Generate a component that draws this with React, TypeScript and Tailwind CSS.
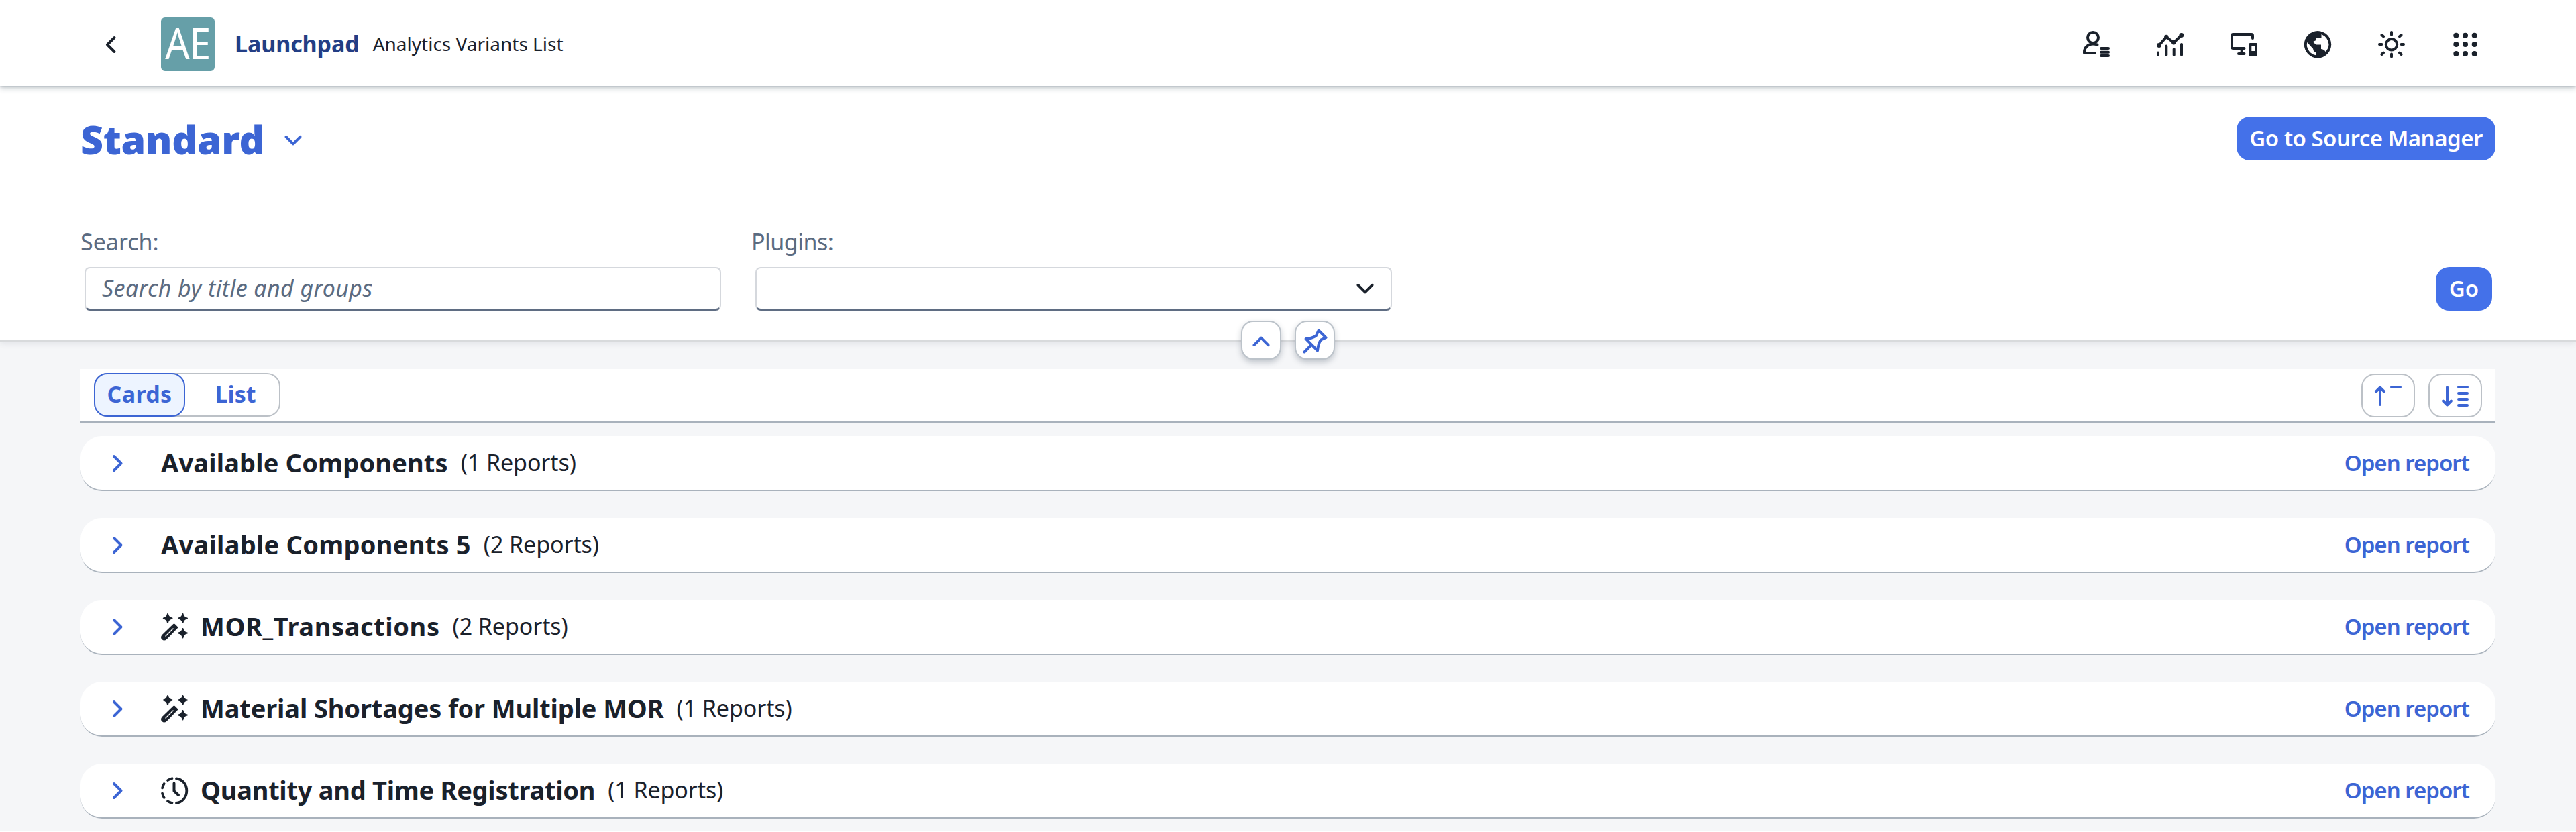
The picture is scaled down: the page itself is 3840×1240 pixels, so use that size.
import type { ReactNode } from "react";

const groups = [
  { title: "Available Components", count: 1, icon: null, tracking: "tracking-[0.15px]" },
  { title: "Available Components 5", count: 2, icon: null, tracking: "tracking-[0.25px]" },
  { title: "MOR_Transactions", count: 2, icon: "wand", tracking: "tracking-[0.6px]" },
  { title: "Material Shortages for Multiple MOR", count: 1, icon: "wand", tracking: "tracking-[-0.13px]" },
  { title: "Quantity and Time Registration", count: 1, icon: "clock", tracking: "tracking-[-0.27px]" },
];

function Icon({ children, className = "" }: { children: ReactNode; className?: string }) {
  return (
    <svg
      viewBox="0 0 40 40"
      fill="none"
      stroke="currentColor"
      strokeWidth={4}
      strokeLinecap="round"
      strokeLinejoin="round"
      className={`size-10 shrink-0 overflow-visible ${className}`}
    >
      {children}
    </svg>
  );
}

function UserListIcon() {
  return (
    <Icon>
      <circle cx="15" cy="10" r="8" />
      <path d="M21.500 20.700Q18.500 19.500 15 19.500C7.500 19.500 2 25 2 31.500V33H18" />
      <path d="M27 26H38M27 31.700H38M27 37H38" />
    </Icon>
  );
}

function ChartIcon() {
  return (
    <Icon>
      <path d="M3.500 21.500L14.300 9L25.300 17.500L37 6.300" />
      <g fill="currentColor" stroke="none">
        <circle cx="3.5" cy="21.5" r="3.4" />
        <circle cx="14.3" cy="9" r="3.2" />
        <circle cx="25.3" cy="17.3" r="3.2" />
        <circle cx="36.8" cy="6.4" r="3.4" />
      </g>
      <path d="M2 32.500V36M14.300 22.500V36M25.700 27V36M37 20V36" />
    </Icon>
  );
}

function DevicesIcon() {
  return (
    <Icon>
      <path d="M33 11V7Q33 5 31 5H4Q2 5 2 7V24Q2 26 4 26H20.500M16.700 26V34M12 34H20.500" />
      <path
        d="M29 18H38.500Q40 18 40 19.500V36.500Q40 38 38.500 38H29Q27.500 38 27.500 36.500V19.500Q27.500 18 29 18ZM31.300 22V30H36.200V22Z"
        fill="currentColor"
        fillRule="evenodd"
        stroke="none"
      />
    </Icon>
  );
}

function GlobeIcon() {
  return (
    <Icon>
      <circle cx="20" cy="20.3" r="20.2" fill="currentColor" stroke="none" />
      <path
        d="M25.500 5Q35.500 9.500 36.500 20Q36.300 26.500 31.500 31Q30 27.500 25 27V20.500H17.500L12.700 16.300L17.500 14V10H25.500Z"
        fill="white"
        stroke="none"
      />
      <path d="M4.300 17L13 26.500L14 30L18 33V36.500Q6.500 34.500 3.900 23Q3.600 19.500 4.300 17Z" fill="white" stroke="none" />
    </Icon>
  );
}

function SunIcon() {
  return (
    <Icon>
      <circle cx="20" cy="20.3" r="8.2" />
      <path d="M20 2V6M20 34.500V38.500M2 20H5.500M34.500 20H38M5.500 6L8 8.300M34.500 6L32 8.300M5.500 35L8 32.500M34.500 35L32 32.500" />
    </Icon>
  );
}

function GridIcon() {
  return (
    <Icon>
      {[6.7, 20, 34].map((cy) =>
        [6.3, 20, 33.7].map((cx) => (
          <circle key={`${cx}-${cy}`} cx={cx} cy={cy} r="4" fill="currentColor" stroke="none" />
        ))
      )}
    </Icon>
  );
}

function WandIcon() {
  return (
    <Icon>
      <g fill="currentColor" strokeWidth={2}>
        <path d="M10 1Q10.700 6.300 16.500 7.500Q10.700 8.700 10 14Q9.300 8.700 3.800 7.500Q9.300 6.300 10 1Z" />
        <path d="M32.500 1Q33.200 6.300 39 7.500Q33.200 8.700 32.500 14Q31.800 8.700 26 7.500Q31.800 6.300 32.500 1Z" />
        <path d="M32.500 23Q33.200 28.300 39 29.500Q33.200 30.700 32.500 36.500Q31.800 30.700 26 29.500Q31.800 28.300 32.500 23Z" />
      </g>
      <path d="M19.500 17.700L23 21.200L7 37.500Q4.800 39.400 3 37.700Q1.200 36 3 33.800Z" fill="currentColor" />
      <path d="M7 34L18 23" stroke="white" strokeWidth={1.4} />
    </Icon>
  );
}

function ClockIcon() {
  return (
    <Icon>
      <path d="M23 2.500C32 3.500 38.300 11 38.300 20.500S32 37.800 23 39" strokeWidth={3.8} />
      <path d="M16.500 2.200Q13 3 10 5M4.700 10Q2.800 13 2 16.500M2 24.500Q2.800 28 4.700 31M10 36.200Q13 38 16.500 38.700" strokeWidth={3.6} />
      <path d="M19.500 9.500V21L26 27" />
    </Icon>
  );
}

function ChevronDown({ className = "" }: { className?: string }) {
  return (
    <Icon className={className}>
      <path d="M9.500 14.800L20 25.300L30.500 14.800" />
    </Icon>
  );
}

function Header() {
  return (
    <header className="relative z-10 flex h-32 shrink-0 items-center bg-white pt-1 pr-[145px] pl-[145px] shadow-[0_4px_8px_0_rgba(34,53,72,0.2),0_1px_4px_0_rgba(34,53,72,0.22)]">
      <button type="button" aria-label="Back">
        <Icon>
          <path d="M25.500 10L15 20.500L25.500 31" />
        </Icon>
      </button>
      <div className="ml-[55px] flex size-20 items-center justify-center rounded-[6px] bg-[#669fa8] pb-[4px]">
        <span className="inline-block scale-x-[0.89] text-[64px] leading-none text-white">AE</span>
      </div>
      <span className="ml-[30px] pb-[2px] text-[34px] leading-none font-bold tracking-[-0.1px] text-[#233e85]">
        Launchpad
      </span>
      <span className="ml-[20px] pb-[2px] text-[28px] leading-none">Analytics Variants List</span>
      <nav className="ml-auto flex items-center gap-[70px]">
        <UserListIcon />
        <ChartIcon />
        <DevicesIcon />
        <GlobeIcon />
        <SunIcon />
        <GridIcon />
      </nav>
    </header>
  );
}

function FilterBar() {
  return (
    <section className="relative h-[381px] shrink-0 border-b-2 border-[#d8dadc] bg-white px-[120px] pt-[46px] shadow-[0_4px_8px_0_rgba(34,53,72,0.08)]">
      <div className="flex h-[65px] items-center justify-between">
        <div className="flex items-center text-[#3c65d4]">
          <h1 className="pt-px text-[59px] leading-none font-black tracking-[-0.3px]">Standard</h1>
          <ChevronDown className="mt-[5px] ml-[23px]" />
        </div>
        <button
          type="button"
          className="flex h-[65px] w-[386px] items-center justify-center rounded-[20px] bg-[#4471e9] pb-[2px] text-[33px] leading-none font-semibold tracking-[-0.5px] whitespace-nowrap text-white"
        >
          Go to Source Manager
        </button>
      </div>

      {/* Filters */}
      <div className="mt-[104px] flex items-end">
        <label className="flex flex-col">
          <span className="text-[34px] leading-[34px] text-[#5b6b81]">Search:</span>
          <input
            type="text"
            placeholder="Search by title and groups"
            className="mt-[21px] ml-[6px] h-[65px] w-[949px] rounded-[8px] border-2 border-b-3 border-[#d5d8dd] border-b-[#5f6d83] pr-6 pb-[2px] pl-[24px] text-[34px] tracking-[0.4px] italic placeholder:text-[#5b6b81] focus:outline-none"
          />
        </label>
        <div className="ml-[45px] flex flex-col">
          <span className="text-[34px] leading-[34px] tracking-[-0.5px] text-[#5b6b81]">Plugins:</span>
          <button
            type="button"
            aria-label="Plugins"
            className="mt-[21px] ml-[6px] flex h-[65px] w-[949px] items-center justify-end rounded-[8px] border-2 border-b-3 border-[#d5d8dd] border-b-[#5f6d83] pr-[18px]"
          >
            <ChevronDown />
          </button>
        </div>
        <button
          type="button"
          className="mr-[5px] ml-auto flex h-[65px] w-[84px] items-center justify-center rounded-[20px] bg-[#4471e9] pb-[2px] text-[33px] leading-none font-semibold text-white"
        >
          Go
        </button>
      </div>

      {/* Collapse and pin buttons over the bottom edge */}
      <div className="absolute top-[350px] left-[1850px] flex gap-5 text-[#3c65d4]">
        <button
          type="button"
          aria-label="Collapse"
          className="flex h-[58px] w-[60px] items-center justify-center rounded-[18px] border-2 border-[#bcc3ca] bg-white shadow-[0_4px_8px_0_rgba(34,53,72,0.25)]"
        >
          <ChevronDown className="mt-[3px] rotate-180" />
        </button>
        <button
          type="button"
          aria-label="Pin"
          className="flex h-[58px] w-[60px] items-center justify-center rounded-[18px] border-2 border-[#bcc3ca] bg-white shadow-[0_4px_8px_0_rgba(34,53,72,0.25)]"
        >
          <Icon>
            <path d="M25.700 5.500L36.500 16.200L29 19.500Q25 25 24 35.500L6.700 18Q15 17.500 21.700 13.700Z" />
            <path d="M14.700 27L4.500 37.500" />
          </Icon>
        </button>
      </div>
    </section>
  );
}

function Toolbar() {
  return (
    <div className="flex h-20 items-start justify-between border-b-2 border-[#a9b2bc] bg-white px-5 text-[#3c65d4]">
      <div className="mt-[6px] flex h-[65px] w-[278px] rounded-[20px] text-[34px] leading-none font-bold shadow-[inset_0_0_0_2px_#bcc1c7]">
        <button
          type="button"
          className="flex h-[65px] w-[136px] shrink-0 items-center justify-center rounded-[20px] border-2 border-[#3c65d4] bg-[#edf4ff] pb-[3px] tracking-[0.3px]"
        >
          Cards
        </button>
        <button type="button" className="flex h-[65px] w-[142px] shrink-0 items-center justify-center pb-[3px] pl-2">
          List
        </button>
      </div>
      <div className="mt-[7px] flex gap-5">
        <button
          type="button"
          aria-label="Collapse all"
          className="flex h-[65px] w-20 items-center justify-center rounded-[20px] border-2 border-[#bcc1c7]"
        >
          <Icon>
            <path d="M8 7.500V33M2 13.500L8 7.500L14 13.500M25 7H38" />
          </Icon>
        </button>
        <button
          type="button"
          aria-label="Expand all"
          className="flex h-[65px] w-20 items-center justify-center rounded-[20px] border-2 border-[#bcc1c7]"
        >
          <Icon>
            <path d="M8 7V33.500M2 27.500L8 33.500L14 27.500M25 7H38M25 16H38M25 25H38M25 34H38" />
          </Icon>
        </button>
      </div>
    </div>
  );
}

export default function App() {
  return (
    <div className="flex h-[1240px] w-[3840px] flex-col overflow-hidden border-b border-white bg-[#f5f6f8] font-['Noto_Sans',sans-serif] text-[#1a212b]">
      <Header />
      <FilterBar />
      <main className="px-[120px] pt-[41px]">
        <Toolbar />
        <div className="mt-5 flex flex-col gap-10">
          {groups.map((group) => (
            <div
              key={group.title}
              className="flex h-[82px] items-center rounded-[32px] border-b-2 border-[#a9b2bc] bg-white pr-[39px] pl-[35px]"
            >
              <Icon className="text-[#3c65d4]">
                <path d="M15 10L25.500 20.500L15 31" />
              </Icon>
              <div className="ml-[45px] flex items-center">
                {group.icon === "wand" && <WandIcon />}
                {group.icon === "clock" && <ClockIcon />}
                <h2
                  className={`pb-[2px] text-[38px] leading-none font-bold whitespace-nowrap ${group.tracking} ${
                    group.icon ? "ml-[19px]" : ""
                  }`}
                >
                  {group.title}
                </h2>
                <span className="ml-[19px] pb-[2px] text-[34px] leading-none tracking-[-0.1px]">
                  ({group.count} Reports)
                </span>
              </div>
              <a
                href="#"
                className="ml-auto pb-[2px] text-[33px] leading-none font-semibold tracking-[-1px] text-[#3c65d4]"
              >
                Open report
              </a>
            </div>
          ))}
        </div>
      </main>
    </div>
  );
}
